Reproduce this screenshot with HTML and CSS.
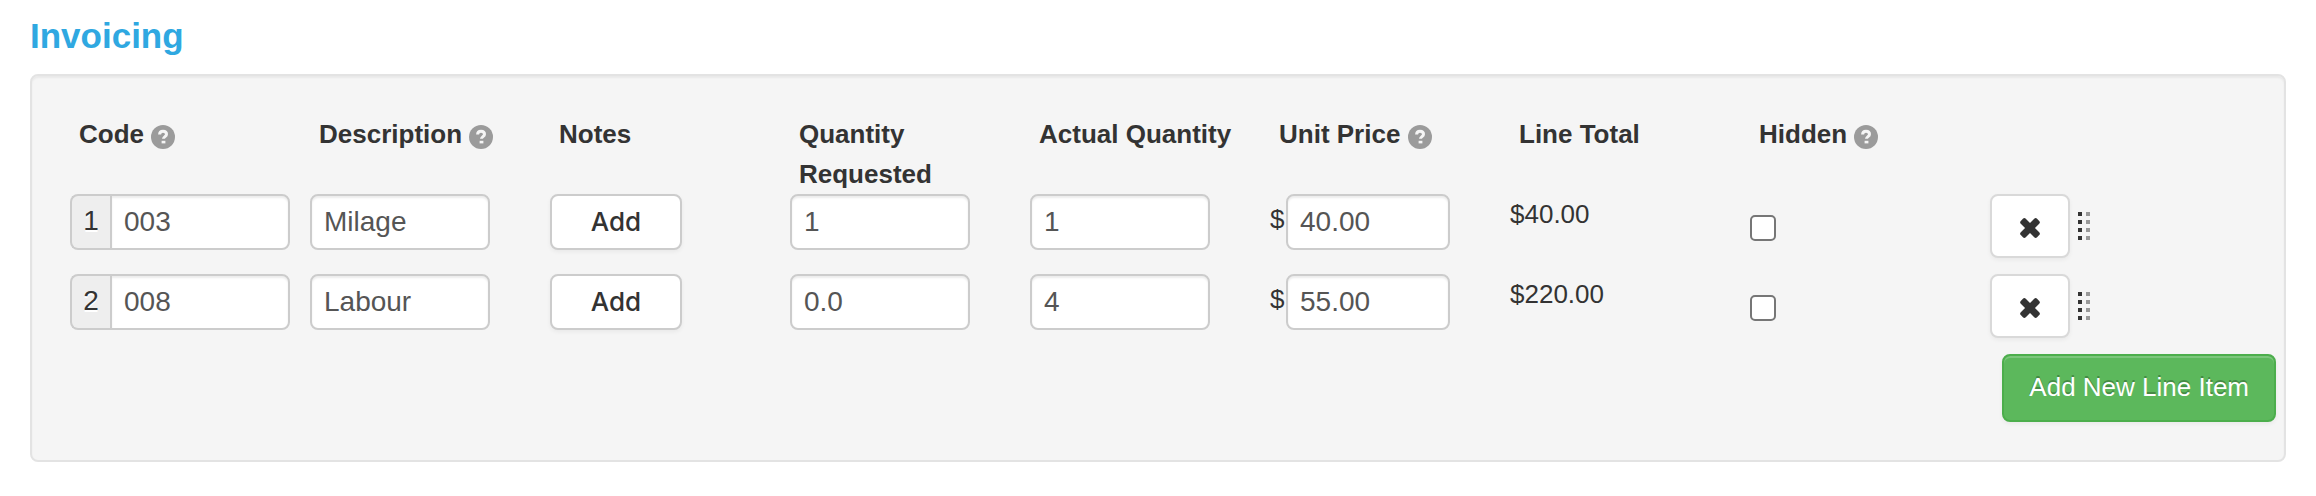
FILE: index.html
```html
<!DOCTYPE html>
<html lang="en">
<head>
<meta charset="utf-8">
<title>Invoicing</title>
<link rel="stylesheet" href="styles.css">
</head>
<body>
<svg class="sprite" aria-hidden="true">
  <symbol id="help" viewBox="0 0 24 24">
    <circle cx="12" cy="12" r="12" fill="#9b9b9b"/>
    <path d="M8.600 9.400C8.600 7.200 10 6.200 12 6.200s3.500 1.100 3.500 3c0 2.400-3 2.400-3 4.600" fill="none" stroke="#f5f5f5" stroke-width="3"/>
    <path d="M10.600 15.800h3.800v2.600h-3.800z" fill="#f5f5f5"/>
  </symbol>
  <symbol id="remove" viewBox="0 0 20 20">
    <g fill="#333" transform="rotate(45 10 10)">
      <rect x="-1.500" y="6.500" width="23" height="7" rx="2"/>
      <rect x="6.500" y="-1.500" width="7" height="23" rx="2"/>
    </g>
  </symbol>
  <symbol id="grip" viewBox="0 0 12 28">
    <path d="M0 0h4v4H0zM0 8h4v4H0zM0 16h4v4H0zM0 24h4v4H0z" fill="#333"/>
    <path d="M8 0h4v4H8zM8 8h4v4H8zM8 16h4v4H8zM8 24h4v4H8z" fill="#999"/>
  </symbol>
</svg>
<main>
  <h1 class="title">Invoicing</h1>
  <form class="well">
    <table class="items">
      <thead>
        <tr>
          <th scope="col">Code <svg class="help"><use href="#help"/></svg></th>
          <th scope="col">Description <svg class="help"><use href="#help"/></svg></th>
          <th scope="col">Notes</th>
          <th scope="col">Quantity Requested</th>
          <th scope="col">Actual Quantity</th>
          <th scope="col">Unit Price <svg class="help"><use href="#help"/></svg></th>
          <th scope="col">Line Total</th>
          <th scope="col">Hidden <svg class="help"><use href="#help"/></svg></th>
          <td></td>
        </tr>
      </thead>
      <tbody>
        <tr>
          <td><div class="code"><label class="number" for="code-1">1</label><input class="field" id="code-1" type="text" value="003"></div></td>
          <td><input class="field" type="text" value="Milage" aria-label="Description"></td>
          <td><button class="btn add" type="button">Add</button></td>
          <td><input class="field" type="text" value="1" aria-label="Quantity requested"></td>
          <td><input class="field" type="text" value="1" aria-label="Actual quantity"></td>
          <td><div class="price"><label class="currency" for="price-1">$</label><input class="field" id="price-1" type="text" value="40.00"></div></td>
          <td>$40.00</td>
          <td><input class="check" type="checkbox" aria-label="Hidden"></td>
          <td><div class="actions"><button class="btn remove" type="button" aria-label="Remove"><svg class="cross"><use href="#remove"/></svg></button><svg class="grip"><use href="#grip"/></svg></div></td>
        </tr>
        <tr>
          <td><div class="code"><label class="number" for="code-2">2</label><input class="field" id="code-2" type="text" value="008"></div></td>
          <td><input class="field" type="text" value="Labour" aria-label="Description"></td>
          <td><button class="btn add" type="button">Add</button></td>
          <td><input class="field" type="text" value="0.0" aria-label="Quantity requested"></td>
          <td><input class="field" type="text" value="4" aria-label="Actual quantity"></td>
          <td><div class="price"><label class="currency" for="price-2">$</label><input class="field" id="price-2" type="text" value="55.00"></div></td>
          <td>$220.00</td>
          <td><input class="check" type="checkbox" aria-label="Hidden"></td>
          <td><div class="actions"><button class="btn remove" type="button" aria-label="Remove"><svg class="cross"><use href="#remove"/></svg></button><svg class="grip"><use href="#grip"/></svg></div></td>
        </tr>
      </tbody>
    </table>
    <button class="btn success" type="button">Add New Line Item</button>
  </form>
</main>
</body>
</html>
```

FILE: styles.css
```css
* {
  box-sizing: border-box;
}

body {
  margin: 0;
  background: #fff;
  color: #333;
  font: 26px/40px "Liberation Sans", Arial, sans-serif;
}

main {
  padding: 0 30px 34px;
}

.sprite {
  display: none;
}

.title {
  margin: 0;
  padding: 16px 0 18px;
  color: #2fa8e1;
  font-size: 35px;
  line-height: 40px;
}

.well {
  display: flex;
  flex-direction: column;
  padding: 38px 8px 38px 38px;
  background: #f5f5f5;
  border: 2px solid #e3e3e3;
  border-radius: 8px;
  box-shadow: inset 0 2px 2px rgba(0, 0, 0, 0.05);
}

.items {
  width: calc(100% - 46px);
  border-collapse: collapse;
  table-layout: fixed;
}

.items th,
.items td {
  height: 80px;
  padding: 0;
  text-align: left;
  vertical-align: top;
}

.items th {
  padding: 0 20px 0 9px;
}

.help {
  width: 24px;
  height: 24px;
  vertical-align: -6px;
}

.field {
  display: block;
  width: 75%;
  height: 56px;
  padding: 0 12px;
  background: #fff;
  border: 2px solid #ccc;
  border-radius: 8px;
  box-shadow: inset 0 2px 2px rgba(0, 0, 0, 0.075);
  color: #555;
  font: 28px/40px "Liberation Sans", Arial, sans-serif;
}

.code,
.price,
.actions {
  display: flex;
}

.code {
  padding-right: 20px;
}

.code .field,
.price .field {
  flex: 1;
  min-width: 0;
}

.code .field {
  border-radius: 0 8px 8px 0;
}

.number {
  width: 40px;
  height: 56px;
  background: #eee;
  border: 2px solid #ccc;
  border-right: 0;
  border-radius: 8px 0 0 8px;
  font-size: 28px;
  line-height: 50px;
  text-align: center;
  text-shadow: 0 2px 0 #fff;
}

.price {
  padding-right: 60px;
}

.currency {
  width: 16px;
  line-height: 50px;
}

.btn {
  background: #fff;
  border: 2px solid #ccc;
  border-radius: 8px;
  box-shadow: 0 2px 4px rgba(0, 0, 0, 0.05);
  color: #333;
  font: 26px/40px "Liberation Sans", Arial, sans-serif;
}

.add {
  display: block;
  width: 132px;
  height: 56px;
  font-family: Inter, "Liberation Sans", sans-serif;
  font-weight: 500;
}

.check {
  display: block;
  width: 26px;
  height: 26px;
  margin: 21px 0 0;
  appearance: none;
  background: #fff;
  border: 2px solid #767676;
  border-radius: 5px;
}

.check:checked {
  background: #767676;
}

.actions {
  gap: 8px;
}

.remove {
  width: 80px;
  height: 64px;
  padding: 4px 0 0;
  border-color: #d9d9d9;
}

.cross {
  display: block;
  width: 20px;
  height: 20px;
  margin: 0 auto;
}

.grip {
  width: 12px;
  height: 28px;
  margin-top: 18px;
}

.success {
  align-self: flex-end;
  height: 68px;
  padding: 0 25px 2px;
  background: #5cb85c;
  border-color: #4cae4c;
  box-shadow: inset 0 2px 0 rgba(255, 255, 255, 0.2), 0 2px 4px rgba(0, 0, 0, 0.05);
  color: #fff;
  text-shadow: 0 -2px 0 rgba(0, 0, 0, 0.25);
}
```
